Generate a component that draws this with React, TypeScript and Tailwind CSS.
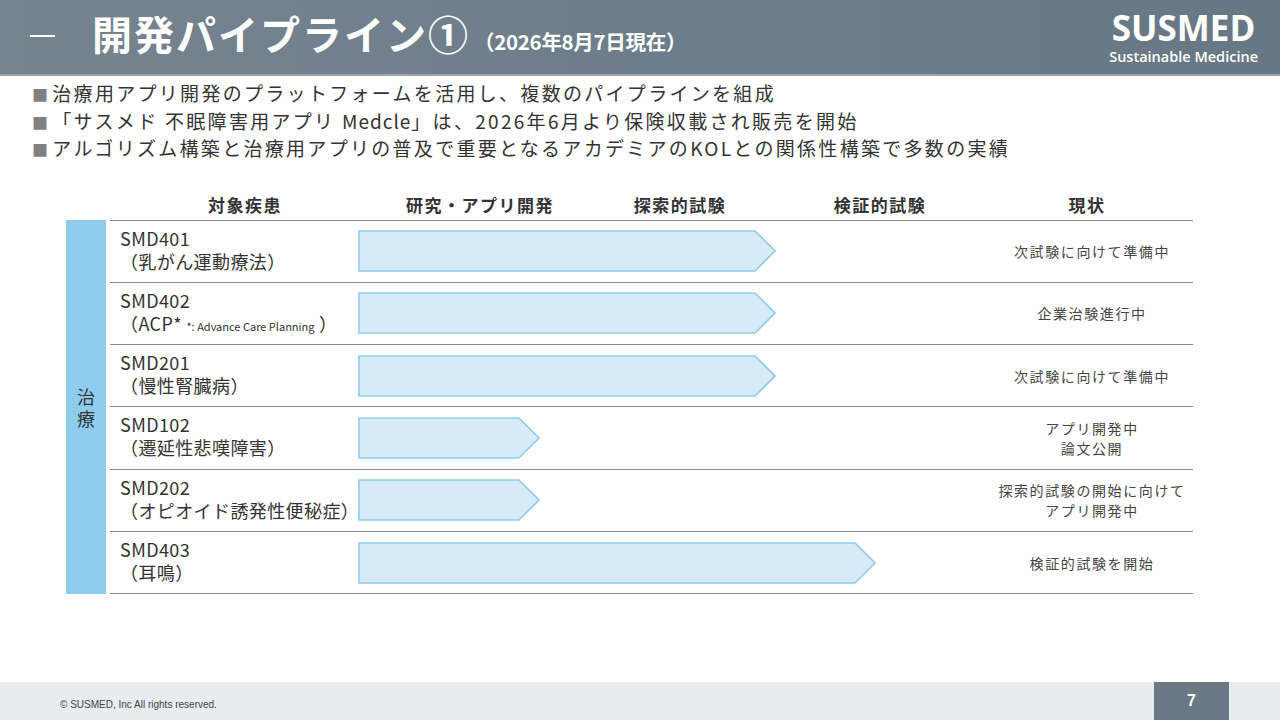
import React from 'react';

interface Pipeline {
  code: string;
  name: React.ReactNode;
  arrow: number;
  status: string[];
}

const rows: Pipeline[] = [
  { code: 'SMD401', name: '（乳がん運動療法）', arrow: 418, status: ['次試験に向けて準備中'] },
  {
    code: 'SMD402',
    name: (
      <>
        （ACP* <span className="text-[11px] tracking-normal">*: Advance Care Planning</span> ）
      </>
    ),
    arrow: 418,
    status: ['企業治験進行中'],
  },
  { code: 'SMD201', name: '（慢性腎臓病）', arrow: 418, status: ['次試験に向けて準備中'] },
  { code: 'SMD102', name: '（遷延性悲嘆障害）', arrow: 182, status: ['アプリ開発中', '論文公開'] },
  { code: 'SMD202', name: '（オピオイド誘発性便秘症）', arrow: 182, status: ['探索的試験の開始に向けて', 'アプリ開発中'] },
  { code: 'SMD403', name: '（耳鳴）', arrow: 518, status: ['検証的試験を開始'] },
];

function Arrow({ length }: { length: number }) {
  const h = 42;
  const tip = 20;
  return (
    <svg width={length} height={h} viewBox={`0 0 ${length} ${h}`}>
      <polygon
        points={`1,1 ${length - tip - 1},1 ${length - 1},${h / 2} ${length - tip - 1},${h - 1} 1,${h - 1}`}
        fill="#d6eaf7"
        stroke="#92cdea"
        strokeWidth={1.6}
      />
    </svg>
  );
}

export default function App() {
  const jp = { fontFamily: '"Noto Sans CJK JP", "Noto Sans", sans-serif' };

  return (
    <div className="w-[1280px] h-[720px] bg-white flex flex-col overflow-hidden text-[#333]" style={jp}>
      {/* header */}
      <header className="h-[76px] shrink-0 bg-gradient-to-r from-[#75848f] via-[#6e7d8a] to-[#687784] border-b-2 border-[#9aa6af] flex items-center justify-between pl-[30px] pr-[22px]">
        <div className="flex items-end text-white font-bold">
          <span className="w-[25px] h-[2px] bg-white mb-[24px] mr-[37px]" />
          <span className="text-[40px] leading-none tracking-[2px] mb-[8px]">開発パイプライン①</span>
          <span className="text-[20.5px] leading-none tracking-[-0.3px] ml-[4px] mb-[10px]">（2026年8月7日現在）</span>
        </div>
        <div className="flex flex-col items-center text-white font-bold" style={{ fontFamily: '"Open Sans", sans-serif' }}>
          <span className="text-[35px] leading-[38px]">SUSMED</span>
          <span className="text-[14.5px] leading-[16px] mt-[2px] font-semibold">Sustainable Medicine</span>
        </div>
      </header>

      {/* bullets */}
      <div className="mt-[4px] pl-[32px] text-[19px] leading-[26.5px] tracking-[2.3px] text-[#333]">
        <p><span className="text-[#808080] text-[16px] mr-[2px]">■</span>治療用アプリ開発のプラットフォームを活用し、複数のパイプラインを組成</p>
        <p><span className="text-[#808080] text-[16px] mr-[2px]">■</span>「サスメド 不眠障害用アプリ <span className="tracking-[1px]">Medcle</span>」は、2026年6月より保険収載され販売を開始</p>
        <p><span className="text-[#808080] text-[16px] mr-[2px]">■</span>アルゴリズム構築と治療用アプリの普及で重要となるアカデミアのKOLとの関係性構築で多数の実績</p>
      </div>

      {/* table header */}
      <div className="mt-[27px] pl-[110px] flex h-[30px] items-center text-[17px] font-bold tracking-[1.5px] text-[#333]">
        <div className="w-[270px] text-center">対象疾患</div>
        <div className="w-[200px] text-center">研究・アプリ開発</div>
        <div className="w-[200px] text-center">探索的試験</div>
        <div className="w-[200px] text-center">検証的試験</div>
        <div className="w-[214px] text-center">現状</div>
      </div>

      {/* table body */}
      <div className="flex pl-[66px]">
        <div className="w-[40px] mr-[4px] bg-[#8ecdee] flex items-center justify-center">
          <span className="text-[18px] leading-[22px] w-[18px] text-center text-[#333]">治療</span>
        </div>
        <div className="w-[1083px] border-b-[1.5px] border-[#8c8c8c]">
          {rows.map((r) => (
            <div key={r.code} className="h-[62.3px] flex border-t-[1.5px] border-[#8c8c8c]">
              <div className="w-[248px] pl-[10px] pt-[6px] text-[18px] leading-[23px] tracking-[0.4px] text-[#333]">
                <div>{r.code}</div>
                <div className="whitespace-nowrap">{r.name}</div>
              </div>
              <div className="w-[633px] flex items-center">
                <Arrow length={r.arrow} />
              </div>
              <div className="w-[202px] flex flex-col items-center justify-center text-[14px] leading-[20px] tracking-[1.6px] text-[#444]">
                {r.status.map((s) => (
                  <span key={s}>{s}</span>
                ))}
              </div>
            </div>
          ))}
        </div>
      </div>

      <div className="flex-1" />

      {/* footer */}
      <footer className="h-[38px] shrink-0 bg-[#e8ecef] flex items-center">
        <span className="ml-[60px] mt-[6px] text-[10px] text-[#444]" style={{ fontFamily: '"Liberation Sans", sans-serif' }}>
          © SUSMED, Inc All rights reserved.
        </span>
        <div className="flex-1" />
        <div className="w-[75px] h-full bg-[#6b7885] mr-[51px] flex items-center justify-center text-white font-bold text-[16px]" style={{ fontFamily: '"Liberation Sans", sans-serif' }}>
          7
        </div>
      </footer>
    </div>
  );
}
